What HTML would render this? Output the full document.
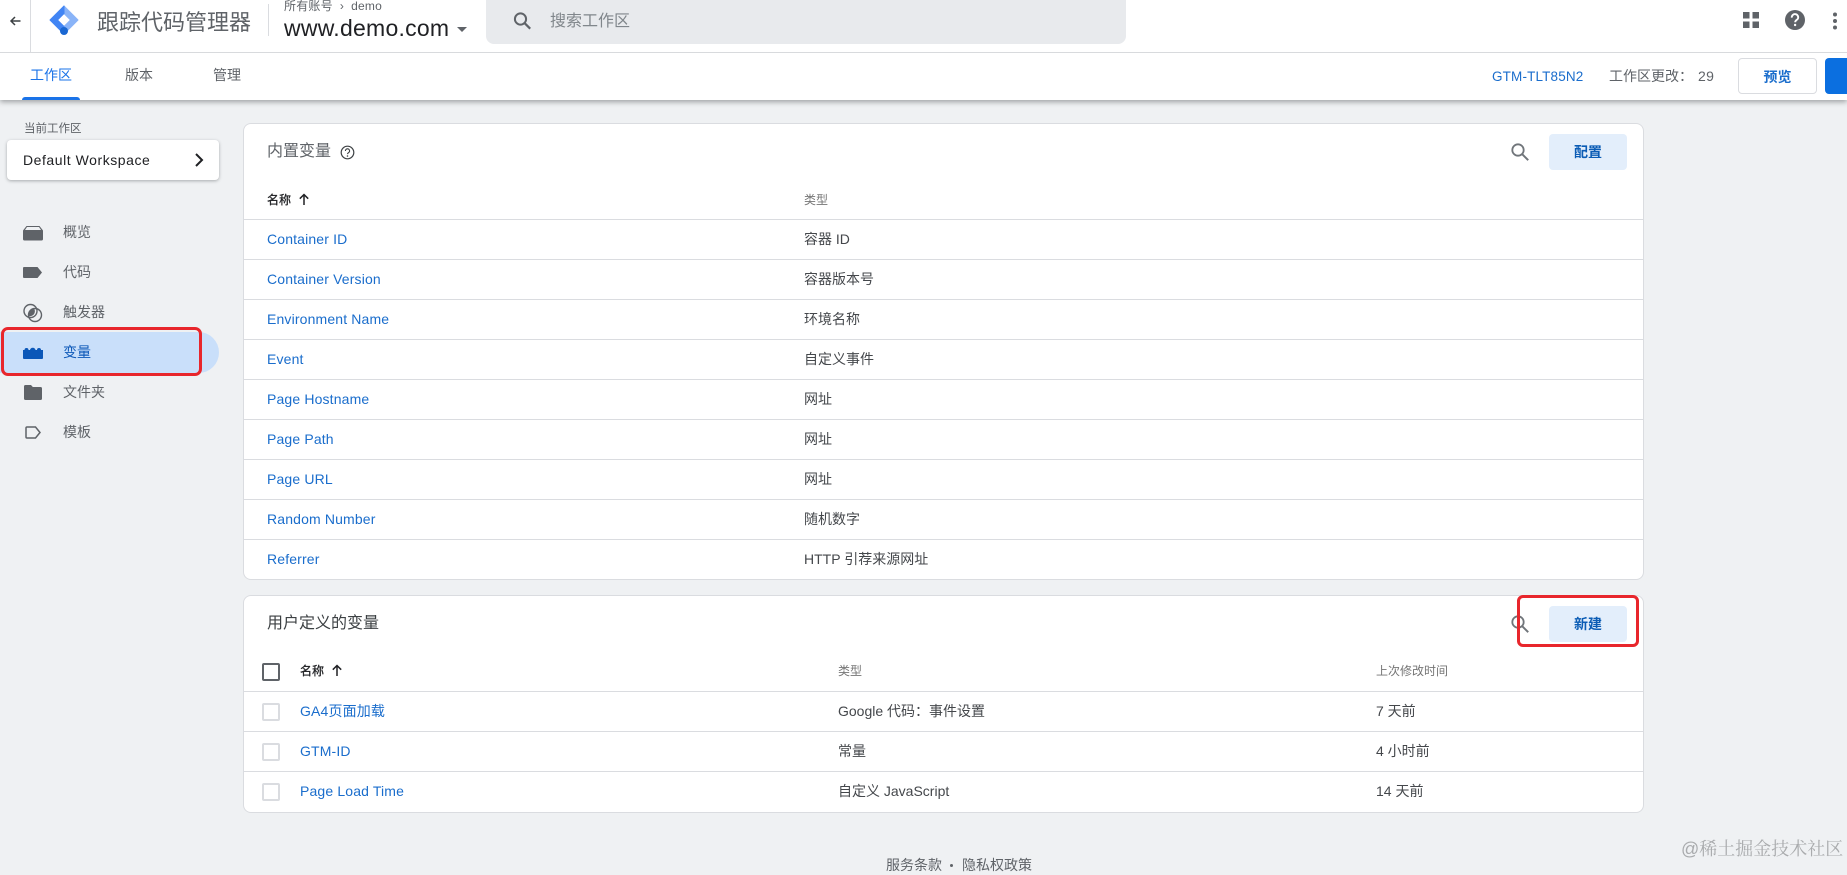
<!DOCTYPE html>
<html lang="zh-CN">
<head>
<meta charset="utf-8">
<title>跟踪代码管理器</title>
<style>
*{box-sizing:border-box}
html,body{margin:0;padding:0;width:1847px;height:864px;overflow:hidden;background:#eff1f3;font-family:"Liberation Sans","Noto Sans CJK SC",sans-serif;color:#44474b}
.t{position:absolute;white-space:nowrap;line-height:20px;height:20px;font-size:14px}
.a{position:absolute}
.link{color:#1a6dcc;letter-spacing:.15px}
.line{position:absolute;height:1px;background:#dadce0}
.card{position:absolute;left:243px;width:1401px;background:#fff;border:1px solid #dadce0;border-radius:8px}
.btn{position:absolute;left:1549px;width:78px;height:36px;background:#e3eefb;border-radius:4px;color:#0b5cb5;font-size:14px;font-weight:bold;text-align:center;line-height:36px}
.cb{position:absolute;left:262px;width:18px;height:18px;border:2px solid #dadce0;border-radius:2px;background:#fff}
.th{color:#757575;font-size:12px}
.nm{color:#202124;font-size:12px;-webkit-text-stroke:.3px #202124}
.nav{color:#5f6368}
</style>
</head>
<body>
<!-- top header -->
<div class="a" style="left:0;top:0;width:1847px;height:100px;background:#fff;box-shadow:0 2px 5px rgba(60,64,67,.45)"></div>
<div class="line" style="left:0;top:52px;width:1847px;background:#d8dadd"></div>
<div class="a" style="left:30px;top:0;width:1px;height:52px;background:#dadce0"></div>
<svg class="a" style="left:8px;top:13px" width="16" height="16" viewBox="0 0 16 16"><path d="M12.500 8H3.500M7 4L3 8l4 4" fill="none" stroke="#3c4043" stroke-width="1.500"/></svg>
<svg class="a" style="left:48px;top:4px" width="32" height="32" viewBox="0 0 32 32">
<path d="M16 2L30 16 16 30V22.500L22.500 16 16 9.500z" fill="#8ab4f8" stroke="#8ab4f8" stroke-linejoin="round"/>
<path d="M16 2L2 16l14 14V22.500L9.500 16 16 9.500z" fill="#4285f4" stroke="#4285f4" stroke-linejoin="round"/>
<circle cx="16" cy="27" r="4" fill="#1967d2"/>
</svg>
<div class="t" style="left:97px;top:11px;font-size:22px;line-height:24px;height:24px;color:#5f6368">跟踪代码管理器</div>
<div class="a" style="left:268px;top:4px;width:1px;height:32px;background:#dadce0"></div>
<div class="t" style="left:284px;top:-4px;font-size:12px;color:#5f6368;letter-spacing:.2px">所有账号 &nbsp;›&nbsp; demo</div>
<div class="t" style="left:284px;top:15px;font-size:23px;line-height:26px;height:26px;color:#202124;letter-spacing:.25px">www.demo.com</div>
<div class="a" style="left:457px;top:27px;width:0;height:0;border-left:5px solid transparent;border-right:5px solid transparent;border-top:5px solid #5f6368"></div>
<div class="a" style="left:486px;top:0;width:640px;height:44px;background:#e8eaed;border-radius:0 0 8px 8px"></div>
<svg class="a" style="left:510px;top:9px" width="24" height="24" viewBox="0 0 24 24"><circle cx="10.500" cy="10" r="5.600" fill="none" stroke="#5f6368" stroke-width="2"/><path d="M14.800 14.300l5.400 5.400" stroke="#5f6368" stroke-width="2.200"/></svg>
<div class="t" style="left:550px;top:12px;font-size:16px;color:#80868b">搜索工作区</div>
<svg class="a" style="left:1743px;top:12px" width="16" height="17" viewBox="0 0 16 17"><path d="M0 0h6.500v6.500H0zM9.500 0H16v6.500H9.500zM0 9.500h6.500V16H0zM9.500 9.500H16V16H9.500z" fill="#5f6368"/></svg>
<svg class="a" style="left:1785px;top:10px" width="20" height="20" viewBox="0 0 20 20"><circle cx="10" cy="10" r="10" fill="#5f6368"/><path d="M6.800 7.600a3.200 3.200 0 116 1.200c-.7 1.200-2.600 1.500-2.600 3.400" fill="none" stroke="#fff" stroke-width="1.900"/><circle cx="10.100" cy="15" r="1.200" fill="#fff"/></svg>
<svg class="a" style="left:1832px;top:12px" width="6" height="18" viewBox="0 0 6 18"><circle cx="3" cy="2.500" r="2" fill="#5f6368"/><circle cx="3" cy="9" r="2" fill="#5f6368"/><circle cx="3" cy="15.500" r="2" fill="#5f6368"/></svg>
<!-- tabs -->
<div class="t" style="left:30px;top:65px;color:#1a73e8">工作区</div>
<div class="a" style="left:22px;top:97px;width:58px;height:3px;background:#1a73e8;border-radius:3px 3px 0 0"></div>
<div class="t" style="left:125px;top:65px;color:#5f6368">版本</div>
<div class="t" style="left:213px;top:65px;color:#5f6368">管理</div>
<div class="t" style="left:1492px;top:67px;color:#1a6dcc;font-size:13.500px;letter-spacing:.15px">GTM-TLT85N2</div>
<div class="t" style="left:1609px;top:66px;color:#5f6368">工作区更改：</div>
<div class="t" style="left:1698px;top:66px;color:#5f6368;letter-spacing:.4px">29</div>
<div class="a" style="left:1738px;top:58px;width:79px;height:36px;border:1px solid #dadce0;border-radius:4px;background:#fff;color:#1a6dcc;font-size:14px;font-weight:bold;text-align:center;line-height:36px">预览</div>
<div class="a" style="left:1825px;top:58px;width:30px;height:36px;background:#0b6fe0;border-radius:4px"></div>
<!-- sidebar -->
<div class="t" style="left:24px;top:119px;font-size:11.500px;color:#5f6368">当前工作区</div>
<div class="a" style="left:7px;top:140px;width:212px;height:40px;background:#fff;border-radius:4px;box-shadow:0 1px 3px rgba(60,64,67,.4)"></div>
<div class="t" style="left:23px;top:150px;color:#202124;letter-spacing:.55px">Default Workspace</div>
<svg class="a" style="left:193px;top:152px" width="12" height="16" viewBox="0 0 12 16"><path d="M3 2l6 6-6 6" fill="none" stroke="#202124" stroke-width="2"/></svg>

<div class="a" style="left:0;top:332px;width:219px;height:41px;background:#c9dffa;border-radius:0 21px 21px 0"></div>
<svg class="a" style="left:23px;top:225px" width="20" height="16" viewBox="0 0 20 16"><path d="M3.500 1h13l3.500 4.500v8.500a1.500 1.500 0 01-1.500 1.500h-17A1.500 1.500 0 010 14V5.500z" fill="#5f6368"/><path d="M4 2h12l2 3H2z" fill="#eff1f3"/></svg>
<svg class="a" style="left:23px;top:266px" width="20" height="13" viewBox="0 0 20 13"><path d="M1 1h13.500L19 6.500 14.500 12H1a1 1 0 01-1-1V2a1 1 0 011-1z" fill="#5f6368"/></svg>
<svg class="a" style="left:23px;top:303px" width="20" height="20" viewBox="0 0 20 20"><circle cx="7.500" cy="8" r="6.500" fill="none" stroke="#5f6368" stroke-width="1.400"/><circle cx="12" cy="12" r="6.500" fill="none" stroke="#5f6368" stroke-width="1.400"/><path d="M6 13c-1.300-3.500 1.500-7 5.500-6.800 1.500 3.800-1.500 7.500-5.500 6.800z" fill="#5f6368"/></svg>
<svg class="a" style="left:23px;top:347px" width="20" height="12" viewBox="0 0 20 12"><path d="M0 3h1.500a2 2 0 014 0h1.500a2.500 2 0 015.500 0H14a2 2 0 014 0h2v8a1 1 0 01-1 1H1a1 1 0 01-1-1z" fill="#0b57b8"/></svg>
<svg class="a" style="left:24px;top:385px" width="18" height="15" viewBox="0 0 18 15"><path d="M1.500 0H7l1.800 2h7.700A1.500 1.500 0 0118 3.500v10a1.500 1.500 0 01-1.500 1.500h-15A1.500 1.500 0 010 13.500v-12A1.500 1.500 0 011.500 0z" fill="#5f6368"/></svg>
<svg class="a" style="left:25px;top:426px" width="16" height="13" viewBox="0 0 16 13"><path d="M2 1h8.500L15 6.500 10.500 12H2a1 1 0 01-1-1V2a1 1 0 011-1z" fill="none" stroke="#5f6368" stroke-width="1.500"/></svg>
<div class="t nav" style="left:63px;top:222px">概览</div>
<div class="t nav" style="left:63px;top:262px">代码</div>
<div class="t nav" style="left:63px;top:302px">触发器</div>
<div class="t" style="left:63px;top:342px;color:#0b57b8">变量</div>
<div class="t nav" style="left:63px;top:382px">文件夹</div>
<div class="t nav" style="left:63px;top:422px">模板</div>
<div class="a" style="left:1px;top:327px;width:201px;height:49px;border:3px solid #e8262c;border-radius:7px"></div>

<!-- card 1 -->
<div class="card" style="top:123px;height:457px"></div>
<div class="t" style="left:267px;top:142px;font-size:16px;color:#5f6368">内置变量</div>
<svg class="a" style="left:340px;top:145px" width="15" height="15" viewBox="0 0 15 15"><circle cx="7.500" cy="7.500" r="6.300" fill="none" stroke="#3c4043" stroke-width="1.200"/><path d="M5.400 6a2.100 2.100 0 114 .8c-.5.800-1.900 1-1.900 2.300" fill="none" stroke="#3c4043" stroke-width="1.100"/><circle cx="7.500" cy="11" r=".8" fill="#3c4043"/></svg>
<svg class="a" style="left:1509px;top:141px" width="22" height="22" viewBox="0 0 22 22"><circle cx="9" cy="9" r="5.700" fill="none" stroke="#70757a" stroke-width="1.800"/><path d="M13.200 13.200l6 6" stroke="#70757a" stroke-width="2"/></svg>
<div class="btn" style="top:134px">配置</div>
<div class="t nm" style="left:267px;top:190px">名称</div>
<svg class="a" style="left:298px;top:193px" width="12" height="13" viewBox="0 0 12 13"><path d="M6 12V2M1.800 5.700L6 1.500l4.200 4.200" fill="none" stroke="#202124" stroke-width="1.500"/></svg>
<div class="t th" style="left:804px;top:190px">类型</div>
<div class="line" style="left:244px;top:219px;width:1399px"></div>
<div class="line" style="left:244px;top:259px;width:1399px"></div>
<div class="line" style="left:244px;top:299px;width:1399px"></div>
<div class="line" style="left:244px;top:339px;width:1399px"></div>
<div class="line" style="left:244px;top:379px;width:1399px"></div>
<div class="line" style="left:244px;top:419px;width:1399px"></div>
<div class="line" style="left:244px;top:459px;width:1399px"></div>
<div class="line" style="left:244px;top:499px;width:1399px"></div>
<div class="line" style="left:244px;top:539px;width:1399px"></div>
<div class="t link" style="left:267px;top:229px">Container ID</div><div class="t" style="left:804px;top:229px">容器 ID</div>
<div class="t link" style="left:267px;top:269px">Container Version</div><div class="t" style="left:804px;top:269px">容器版本号</div>
<div class="t link" style="left:267px;top:309px">Environment Name</div><div class="t" style="left:804px;top:309px">环境名称</div>
<div class="t link" style="left:267px;top:349px">Event</div><div class="t" style="left:804px;top:349px">自定义事件</div>
<div class="t link" style="left:267px;top:389px">Page Hostname</div><div class="t" style="left:804px;top:389px">网址</div>
<div class="t link" style="left:267px;top:429px">Page Path</div><div class="t" style="left:804px;top:429px">网址</div>
<div class="t link" style="left:267px;top:469px">Page URL</div><div class="t" style="left:804px;top:469px">网址</div>
<div class="t link" style="left:267px;top:509px">Random Number</div><div class="t" style="left:804px;top:509px">随机数字</div>
<div class="t link" style="left:267px;top:549px">Referrer</div><div class="t" style="left:804px;top:549px">HTTP 引荐来源网址</div>

<!-- card 2 -->
<div class="card" style="top:595px;height:218px"></div>
<div class="t" style="left:267px;top:614px;font-size:16px;color:#3c4043">用户定义的变量</div>
<svg class="a" style="left:1509px;top:613px" width="22" height="22" viewBox="0 0 22 22"><circle cx="9" cy="9" r="5.700" fill="none" stroke="#70757a" stroke-width="1.800"/><path d="M13.200 13.200l6 6" stroke="#70757a" stroke-width="2"/></svg>
<div class="btn" style="top:606px">新建</div>
<div class="a" style="left:1517px;top:595px;width:122px;height:52px;border:3px solid #e8262c;border-radius:6px"></div>
<div class="cb" style="top:663px;border-color:#5f6368"></div>
<div class="t nm" style="left:300px;top:661px">名称</div>
<svg class="a" style="left:331px;top:664px" width="12" height="13" viewBox="0 0 12 13"><path d="M6 12V2M1.800 5.700L6 1.500l4.200 4.200" fill="none" stroke="#202124" stroke-width="1.500"/></svg>
<div class="t th" style="left:838px;top:661px">类型</div>
<div class="t th" style="left:1376px;top:661px">上次修改时间</div>
<div class="line" style="left:244px;top:691px;width:1399px"></div>
<div class="line" style="left:244px;top:731px;width:1399px"></div>
<div class="line" style="left:244px;top:771px;width:1399px"></div>
<div class="cb" style="top:703px"></div>
<div class="t link" style="left:300px;top:701px">GA4页面加载</div><div class="t" style="left:838px;top:701px">Google 代码：事件设置</div><div class="t" style="left:1376px;top:701px">7 天前</div>
<div class="cb" style="top:743px"></div>
<div class="t link" style="left:300px;top:741px">GTM-ID</div><div class="t" style="left:838px;top:741px">常量</div><div class="t" style="left:1376px;top:741px">4 小时前</div>
<div class="cb" style="top:783px"></div>
<div class="t link" style="left:300px;top:781px">Page Load Time</div><div class="t" style="left:838px;top:781px">自定义 JavaScript</div><div class="t" style="left:1376px;top:781px">14 天前</div>

<!-- footer -->
<div class="t" style="left:886px;top:855px;color:#5f6368">服务条款</div>
<div class="a" style="left:950px;top:864px;width:3px;height:3px;border-radius:50%;background:#5f6368"></div>
<div class="t" style="left:962px;top:855px;color:#5f6368">隐私权政策</div>
<div class="t" style="left:1681px;top:838px;font-size:18px;line-height:22px;height:22px;color:#a9abad;font-family:'Liberation Sans','Noto Serif CJK SC',serif">@稀土掘金技术社区</div>
</body>
</html>
